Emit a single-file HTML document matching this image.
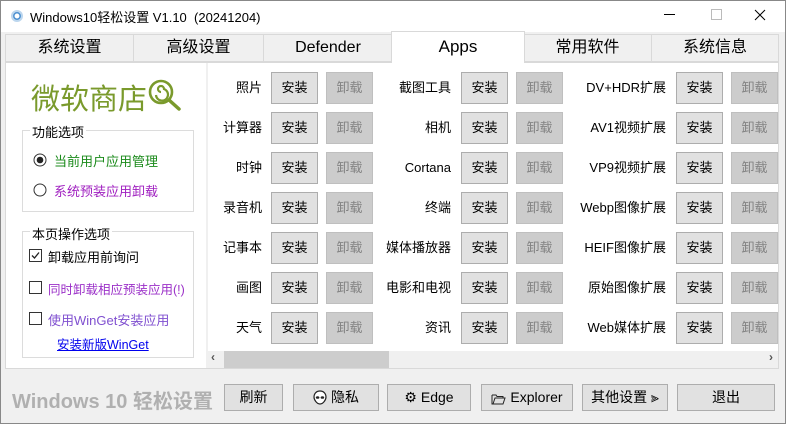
<!DOCTYPE html>
<html><head><meta charset="utf-8"><style>
*{margin:0;padding:0;box-sizing:border-box}
body{width:786px;height:424px;overflow:hidden;background:#f0f0f0;font-family:"Liberation Sans","Noto Sans CJK SC",sans-serif;font-size:13px;color:#000;position:relative}
.a{position:absolute}
.win{left:0;top:0;width:786px;height:424px;border:1px solid #888;background:#f0f0f0}
.title{left:1px;top:1px;width:784px;height:31px;background:#fff}
.tab{top:34px;height:28px;border:1px solid #d9d9d9;background:#f0f0f0;text-align:center;font-size:16px;line-height:26px}
.content{left:5px;top:62px;width:774px;height:307px;background:#fff;border:1px solid #d9d9d9}
.btn{width:47px;height:32px;border:1px solid #adadad;background:#e1e1e1;text-align:center;line-height:30px;font-size:13px}
.dis{background:#cccccc;color:#838383;border-color:#bfbfbf}
.lbl{text-align:right;font-size:13px;line-height:32px}
.grp{border:1px solid #dcdcdc}
.gt{background:#fff;padding:0 2px;font-size:13px}
.bb{top:384px;height:27px;border:1px solid #adadad;background:#e1e1e1;text-align:center;line-height:25px;font-size:14px}
.bb svg{vertical-align:-3px;margin-right:4px}
.cb{width:13px;height:13px;border:1px solid #333;background:#fff}
</style></head><body>
<div class="a win"></div>
<div class="a title"></div>
<svg class="a" style="left:9px;top:8px" width="16" height="16" viewBox="0 0 16 16"><circle cx="8" cy="8" r="6" fill="#bcd6ee"/><circle cx="8" cy="8" r="3.2" fill="#fff" stroke="#4a8fd0" stroke-width="1.5"/></svg>
<div class="a" style="left:30px;top:7px;font-size:13px">Windows10轻松设置 V1.10&nbsp;&nbsp;(20241204)</div>
<div class="a" style="left:664px;top:14px;width:11px;height:1px;background:#000"></div>
<div class="a" style="left:711px;top:9px;width:11px;height:11px;border:1px solid #bbb"></div>
<svg class="a" style="left:754px;top:9px" width="12" height="12"><path d="M1 1L11 11M11 1L1 11" stroke="#000" stroke-width="1"/></svg>

<div class="a tab" style="left:5px;width:129px">系统设置</div>
<div class="a tab" style="left:133px;width:131px">高级设置</div>
<div class="a tab" style="left:263px;width:130px">Defender</div>
<div class="a tab" style="left:651px;width:128px">系统信息</div>
<div class="a tab" style="left:523px;width:129px">常用软件</div>
<div class="a content"></div>
<div class="a tab" style="left:391px;top:31px;height:32px;width:134px;background:#fff;border-bottom:none;line-height:30px;font-size:17px">Apps</div>

<div class="a" style="left:206px;top:63px;width:2px;height:305px;background:#f0f0f0"></div>

<div class="a" style="left:31px;top:76px;font-size:29px;color:#7a9a2c">微软商店</div>
<svg class="a" style="left:148px;top:78px" width="38" height="34" viewBox="0 0 38 34"><circle cx="13" cy="14" r="11" fill="none" stroke="#7a9a2c" stroke-width="2.6"/><path d="M13 14a3 3 0 1 1 3-3a6 6 0 1 1-8 6" fill="none" stroke="#7a9a2c" stroke-width="2.2"/><path d="M21 22L31 31" stroke="#7a9a2c" stroke-width="3.5" stroke-linecap="round"/></svg>

<div class="a grp" style="left:22px;top:130px;width:172px;height:82px"></div>
<div class="a gt" style="left:30px;top:122px">功能选项</div>
<svg class="a" style="left:33px;top:153px" width="14" height="14"><circle cx="7" cy="7" r="6" fill="#fff" stroke="#333"/><circle cx="7" cy="7" r="3.3" fill="#222"/></svg>
<div class="a" style="left:54px;top:151px;color:#1a8a1a">当前用户应用管理</div>
<svg class="a" style="left:33px;top:183px" width="14" height="14"><circle cx="7" cy="7" r="6" fill="#fff" stroke="#333"/></svg>
<div class="a" style="left:54px;top:181px;color:#a020c0">系统预装应用卸载</div>

<div class="a grp" style="left:22px;top:231px;width:172px;height:127px"></div>
<div class="a gt" style="left:30px;top:224px">本页操作选项</div>
<div class="a cb" style="left:29px;top:249px"></div>
<svg class="a" style="left:30px;top:250px" width="11" height="11"><path d="M2 5.5L4.5 8L9 2.5" stroke="#222" fill="none" stroke-width="1.3"/></svg>
<div class="a" style="left:48px;top:247px">卸载应用前询问</div>
<div class="a cb" style="left:29px;top:281px"></div>
<div class="a" style="left:48px;top:279px;color:#9b30c8;font-size:12.5px">同时卸载相应预装应用(!)</div>
<div class="a cb" style="left:29px;top:312px"></div>
<div class="a" style="left:48px;top:310px;color:#8050d0">使用WinGet安装应用</div>
<div class="a" style="left:57px;top:334px;color:#0000ee;text-decoration:underline;font-size:12.5px">安装新版WinGet</div>

<div id="grid"></div>

<div class="a" style="left:208px;top:351px;width:570px;height:17px;background:#f0f0f0"></div>
<div class="a" style="left:224px;top:351px;width:165px;height:17px;background:#cdcdcd"></div>
<div class="a" style="left:211px;top:350px;font-size:12px;font-weight:bold;color:#555">‹</div>
<div class="a" style="left:769px;top:350px;font-size:12px;font-weight:bold;color:#555">›</div>

<div class="a" style="left:12px;top:385px;font-size:20px;font-weight:bold;color:#b0b0b0">Windows 10 轻松设置</div>
<div class="a bb" style="left:224px;width:59px">刷新</div>
<div class="a bb" style="left:293px;width:86px"><svg width="14" height="15" viewBox="0 0 14 15"><path d="M7 1C3 1 1 4 1 7c0 3 3 7 6 7s6-4 6-7c0-3-2-6-6-6z" fill="#fff" stroke="#222" stroke-width="1.2"/><ellipse cx="4.6" cy="7.5" rx="1.8" ry="1.3" fill="#222"/><ellipse cx="9.4" cy="7.5" rx="1.8" ry="1.3" fill="#222"/></svg>隐私</div>
<div class="a bb" style="left:387px;width:84px">⚙ Edge</div>
<div class="a bb" style="left:481px;width:92px"><svg width="15" height="12" viewBox="0 0 15 12"><path d="M1 2h4l1 1.5h6v1.5M1 2v9h11l2-6H4l-2 6" fill="none" stroke="#222" stroke-width="1"/></svg>Explorer</div>
<div class="a bb" style="left:582px;width:86px">其他设置 ⫸</div>
<div class="a bb" style="left:677px;width:98px">退出</div>

<script>
var cols=[{l:["照片","计算器","时钟","录音机","记事本","画图","天气"],e:262,b:271,u:326},
{l:["截图工具","相机","Cortana","终端","媒体播放器","电影和电视","资讯"],e:451,b:461,u:516},
{l:["DV+HDR扩展","AV1视频扩展","VP9视频扩展","Webp图像扩展","HEIF图像扩展","原始图像扩展","Web媒体扩展"],e:666,b:676,u:731}];
var h="";
cols.forEach(function(c){c.l.forEach(function(t,i){var y=72+i*40;
h+='<div class="a lbl" style="left:'+(c.e-130)+'px;width:130px;top:'+y+'px">'+t+'</div>';
h+='<div class="a btn" style="left:'+c.b+'px;top:'+y+'px">安装</div>';
h+='<div class="a btn dis" style="left:'+c.u+'px;top:'+y+'px">卸载</div>';});});
document.getElementById("grid").innerHTML=h;
</script>
</body></html>
